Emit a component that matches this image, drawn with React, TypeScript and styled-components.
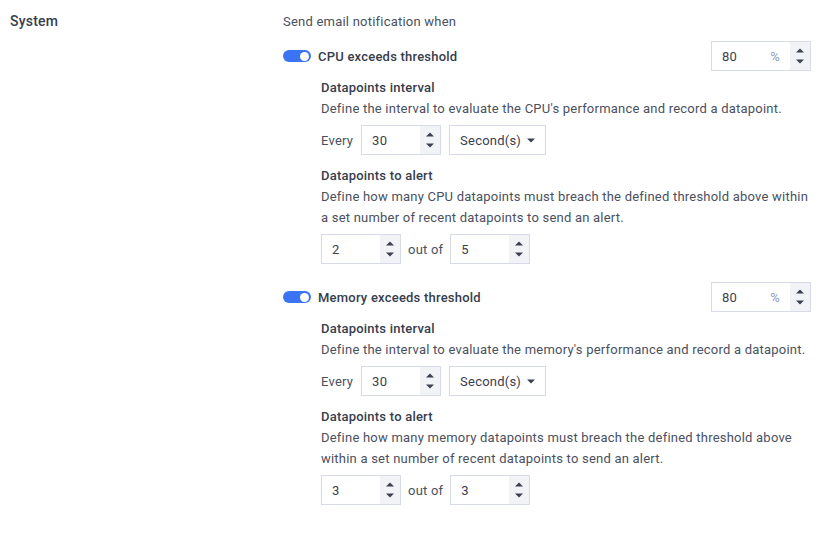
import React from 'react';
import styled, { createGlobalStyle } from 'styled-components';

const GlobalStyle = createGlobalStyle`
  html, body {
    margin: 0;
    padding: 0;
    background: #ffffff;
  }
  body {
    font-family: Roboto, "Liberation Sans", sans-serif;
    font-size: 13px;
    letter-spacing: 0.22px;
    color: #454b59;
  }
`;

const Page = styled.div`
  display: grid;
  grid-template-columns: 273px 528px;
  padding: 11px 0 0 10px;
`;

const SectionLabel = styled.div`
  font-size: 14px;
  font-weight: 500;
  color: #363d4c;
  line-height: 21px;
`;

const Column = styled.div`
  display: flex;
  flex-direction: column;
`;

const Intro = styled.div`
  line-height: 21px;
  color: #4a505e;
`;

const Metric = styled.div<{ $first?: boolean }>`
  display: flex;
  flex-direction: column;
  margin-top: ${(p) => (p.$first ? '9px' : '18px')};
`;

const ToggleRow = styled.div`
  display: flex;
  align-items: center;
  height: 30px;
`;

const Switch = styled.span`
  position: relative;
  width: 28px;
  height: 12px;
  border-radius: 6px;
  background: #3b74f2;
  flex-shrink: 0;

  &::after {
    content: '';
    position: absolute;
    right: 2px;
    top: 1.5px;
    width: 9px;
    height: 9px;
    border-radius: 50%;
    background: #ffffff;
  }
`;

const ToggleLabel = styled.span`
  margin-left: 7px;
  font-weight: 500;
  color: #363d4c;
  flex: 1;
`;

const Settings = styled.div`
  display: flex;
  flex-direction: column;
  padding-left: 38px;
`;

const Heading = styled.div<{ $gap: number }>`
  margin-top: ${(p) => p.$gap}px;
  font-weight: 500;
  line-height: 21px;
  color: #363d4c;
`;

const Description = styled.div`
  line-height: 21px;
  color: #4a505e;
`;

const Controls = styled.div<{ $gap: number }>`
  display: flex;
  align-items: center;
  gap: ${(p) => p.$gap}px;
  margin-top: 6px;
`;

const InlineText = styled.span`
  color: #4a505e;
`;

const Field = styled.div<{ $width: number }>`
  display: flex;
  width: ${(p) => p.$width}px;
  height: 30px;
  box-sizing: border-box;
  border: 1px solid #d6dbe7;
  background: #fff;
`;

const FieldValue = styled.span`
  flex: 1;
  display: flex;
  align-items: center;
  padding-left: 10px;
  color: #3a4050;
`;

const Unit = styled.span`
  display: flex;
  align-items: center;
  padding-right: 10px;
  color: #8e9dbd;
`;

const Spinner = styled.span`
  width: 20px;
  display: flex;
  flex-direction: column;
  align-items: center;
  justify-content: center;
  gap: 6px;
  background: #f2f3f7;
`;

const Select = styled.div`
  display: flex;
  align-items: center;
  gap: 6px;
  height: 30px;
  box-sizing: border-box;
  padding: 0 10px 0 10px;
  border: 1px solid #d6dbe7;
  color: #3a4050;
`;

const Arrow = ({ down }: { down?: boolean }) => (
  <svg width="8" height="5" viewBox="0 0 8 5">
    <path d={down ? 'M0 0.5 H8 L4 4.5 Z' : 'M0 4.5 H8 L4 0.5 Z'} fill="#3a4050" />
  </svg>
);

const NumberField = ({ value, width, unit }: { value: string; width: number; unit?: string }) => (
  <Field $width={width}>
    <FieldValue>{value}</FieldValue>
    {unit && <Unit>{unit}</Unit>}
    <Spinner>
      <Arrow />
      <Arrow down />
    </Spinner>
  </Field>
);

type MetricProps = {
  first?: boolean;
  title: string;
  intervalText: string;
  alertText: React.ReactNode;
  breach: string;
  of: string;
};

const MetricBlock = ({ first, title, intervalText, alertText, breach, of }: MetricProps) => (
  <Metric $first={first}>
    <ToggleRow>
      <Switch />
      <ToggleLabel>{title}</ToggleLabel>
      <NumberField value="80" unit="%" width={100} />
    </ToggleRow>
    <Settings>
      <Heading $gap={6}>Datapoints interval</Heading>
      <Description>{intervalText}</Description>
      <Controls $gap={8}>
        <InlineText>Every</InlineText>
        <NumberField value="30" width={80} />
        <Select>
          Second(s)
          <Arrow down />
        </Select>
      </Controls>
      <Heading $gap={10}>Datapoints to alert</Heading>
      <Description>{alertText}</Description>
      <Controls $gap={7}>
        <NumberField value={breach} width={80} />
        <InlineText>out of</InlineText>
        <NumberField value={of} width={80} />
      </Controls>
    </Settings>
  </Metric>
);

export default function App() {
  return (
    <>
      <GlobalStyle />
      <Page>
        <SectionLabel>System</SectionLabel>
        <Column>
          <Intro>Send email notification when</Intro>
          <MetricBlock
            first
            title="CPU exceeds threshold"
            intervalText="Define the interval to evaluate the CPU's performance and record a datapoint."
            alertText={
              <>
                Define how many CPU datapoints must breach the defined threshold above within
                <br />
                a set number of recent datapoints to send an alert.
              </>
            }
            breach="2"
            of="5"
          />
          <MetricBlock
            title="Memory exceeds threshold"
            intervalText="Define the interval to evaluate the memory's performance and record a datapoint."
            alertText={
              <>
                Define how many memory datapoints must breach the defined threshold above
                <br />
                within a set number of recent datapoints to send an alert.
              </>
            }
            breach="3"
            of="3"
          />
        </Column>
      </Page>
    </>
  );
}
